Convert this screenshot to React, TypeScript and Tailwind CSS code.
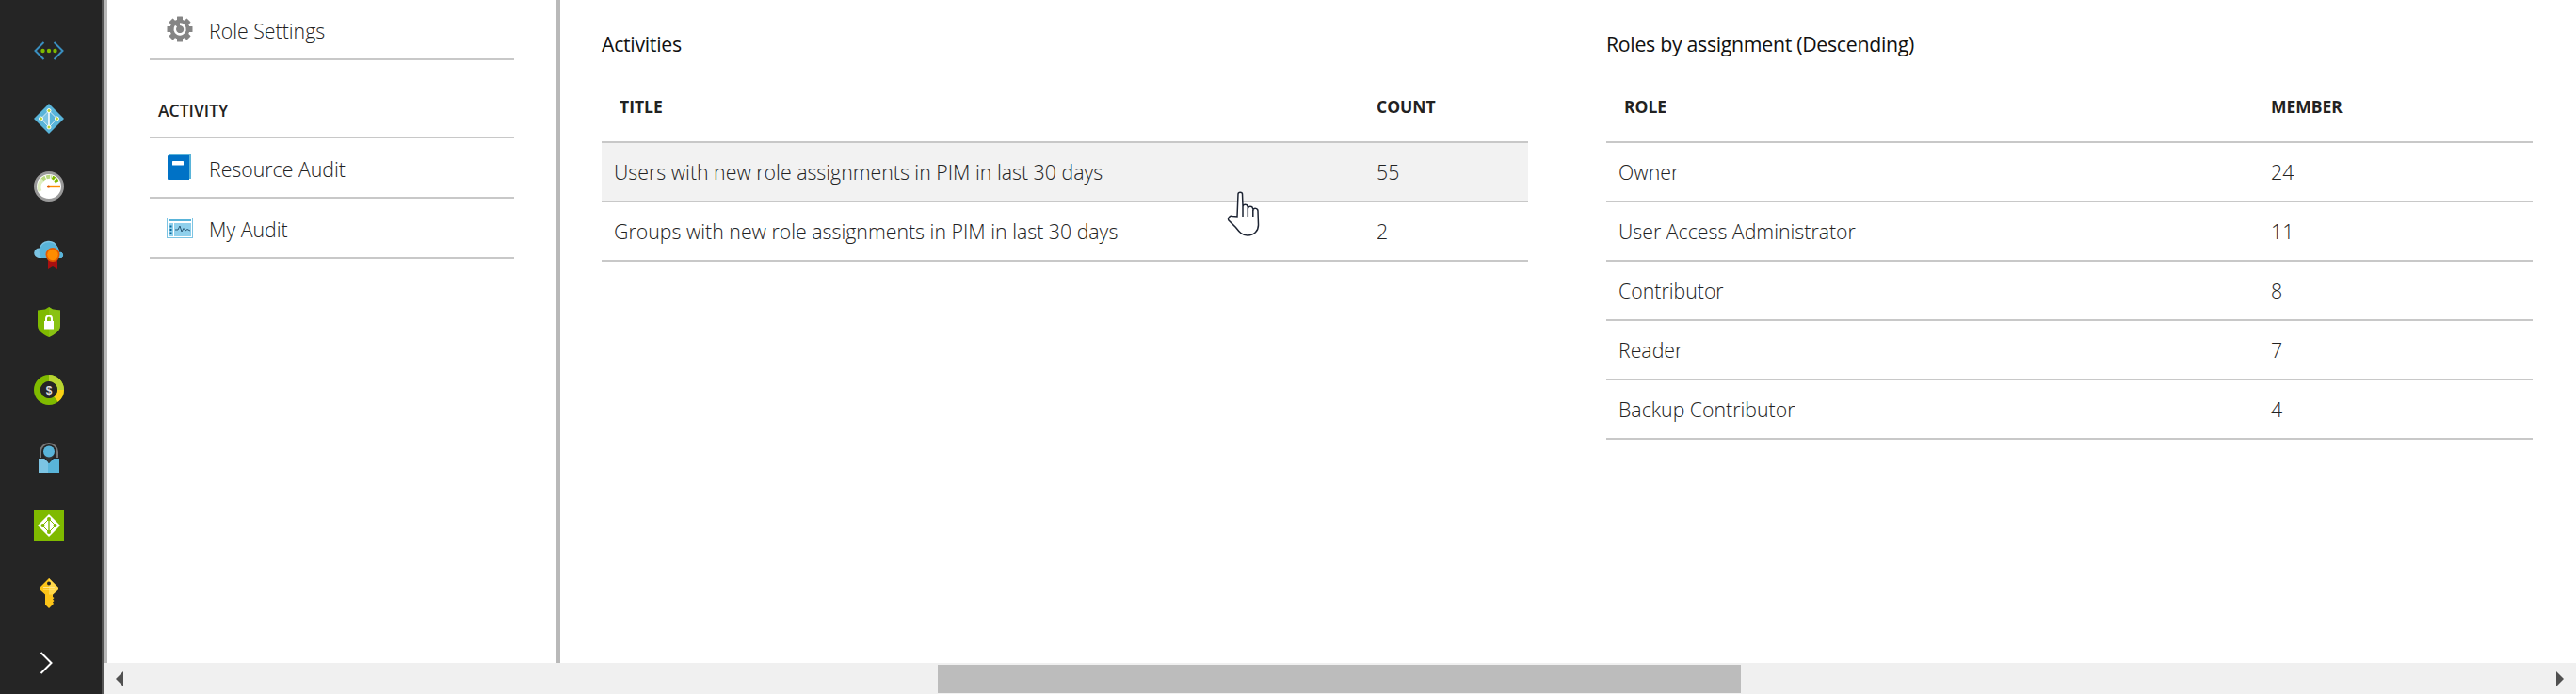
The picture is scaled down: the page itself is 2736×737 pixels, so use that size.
const font = { fontFamily: '"Open Sans", sans-serif' };

function Network() {
  return (
    <svg width="32" height="32" viewBox="0 0 32 32" fill="none">
      <path d="M10.5 1.5 L1.5 10.5 L10.5 19.5" transform="translate(0 5.5)" stroke="#3a8fc0" strokeWidth="2" />
      <path d="M21.5 1.5 L30.5 10.5 L21.5 19.5" transform="translate(0 5.5)" stroke="#3a8fc0" strokeWidth="2" />
      <circle cx="9.5" cy="16" r="2.2" fill="#7fba00" />
      <circle cx="16" cy="16" r="2.2" fill="#7fba00" />
      <circle cx="22.5" cy="16" r="2.2" fill="#7fba00" />
    </svg>
  );
}
function AadDiamond() {
  return (
    <svg width="32" height="32" viewBox="0 0 32 32" fill="none">
      <path d="M16 0 L32 16 L16 32 L0 16 Z" fill="#59b4d9" />
      <path d="M16 7.5 L7.5 16 L16 25 Z" fill="#7cc4e3" />
      <path d="M16 7.5 L24.5 16 L16 25 M16 7.5 L7.5 16 L16 25" stroke="#d8eef8" strokeWidth="1" />
      <path d="M16 7.5 V25" stroke="#fff" strokeWidth="1.5" />
      <circle cx="16" cy="7.5" r="2" fill="#b8d432" stroke="#fff" />
      <circle cx="7.5" cy="16" r="2" fill="#b8d432" stroke="#fff" />
      <circle cx="24.5" cy="16" r="2" fill="#b8d432" stroke="#fff" />
      <circle cx="16" cy="25" r="2" fill="#b8d432" stroke="#fff" />
    </svg>
  );
}
function Gauge() {
  return (
    <svg width="32" height="32" viewBox="0 0 32 32" fill="none">
      <circle cx="16" cy="16" r="14.5" fill="#fff" stroke="#999" strokeWidth="3" />
      <path d="M6.5 21 A10.5 10.5 0 0 1 9 9" stroke="#dfeec0" strokeWidth="4" />
      <path d="M9 9 A10.5 10.5 0 0 1 19 6" stroke="#b8d880" strokeWidth="4" strokeDasharray="4 1" />
      <path d="M19.5 6.5 A10.5 10.5 0 0 1 25 12" stroke="#7fba00" strokeWidth="4" strokeDasharray="3 1" />
      <path d="M15 16 H28" stroke="#ff8c00" strokeWidth="2.4" />
      <circle cx="15.5" cy="16" r="1.6" fill="#e25a00" />
    </svg>
  );
}
function CloudBadge() {
  return (
    <svg width="32" height="32" viewBox="0 0 32 32" fill="none">
      <path d="M5 20 A5 5 0 0 1 6 9.5 A10 10 0 0 1 25 8 A7 7 0 0 1 26.5 14 A3.2 3.2 0 0 1 29 20 Z" fill="#7cc4e3" />
      <path d="M8 20 A9 9 0 0 1 24 7 A7 7 0 0 1 26.5 14 A3.2 3.2 0 0 1 29 20 Z" fill="#59b4d9" />
      <path d="M15 22 V32 L20 29 L25 32 V22 Z" fill="#a80f11" />
      <circle cx="20" cy="16.5" r="7.5" fill="#e25a00" />
      <circle cx="20" cy="16.5" r="5.8" fill="#ff8c00" />
    </svg>
  );
}
function Shield() {
  return (
    <svg width="24" height="32" viewBox="0 0 24 32" fill="none">
      <path d="M12 0 L16 2.5 L24 3.5 V20 C24 26 16 30 12 32 C8 30 0 26 0 20 V3.5 L8 2.5 Z" fill="#7fba00" />
      <path d="M12 0 L16 2.5 L24 3.5 V20 C24 26 16 30 12 32 Z" fill="#90c81f" opacity="0.6" />
      <rect x="7" y="15" width="10" height="8.5" fill="#fff" />
      <path d="M9 15.5 V12.5 A3 3 0 0 1 15 12.5 V15.5" stroke="#fff" strokeWidth="2" />
    </svg>
  );
}
function Cost() {
  return (
    <svg width="32" height="32" viewBox="0 0 32 32" fill="none">
      <circle cx="16" cy="16" r="12.5" stroke="#7fba00" strokeWidth="7" />
      <path d="M16 3.5 A12.5 12.5 0 0 1 28.5 16" stroke="#b8d432" strokeWidth="7" />
      <path d="M28.5 16 A12.5 12.5 0 0 1 23.5 26" stroke="#fcd116" strokeWidth="7" />
      <circle cx="16" cy="16" r="9" fill="#252525" />
      <text x="16" y="20.5" textAnchor="middle" fontSize="12" fontWeight="700" fill="#ddd" fontFamily="'Liberation Sans', sans-serif">$</text>
    </svg>
  );
}
function Support() {
  return (
    <svg width="22" height="32" viewBox="0 0 22 32" fill="none">
      <path d="M2 16 V10 A9 9 0 0 1 20 10 V16" stroke="#777" strokeWidth="2" />
      <path d="M0 17 H6 L11 22 L16 17 H22 V32 H0 Z" fill="#59b4d9" />
      <path d="M0 17 H6 L10 21 V32 H0 Z" fill="#7cc4e3" />
      <path d="M6 14 L11 22 L16 14 Z" fill="#333" />
      <circle cx="11" cy="9.5" r="6" fill="#59b4d9" />
    </svg>
  );
}
function GroupTile() {
  return (
    <svg width="32" height="32" viewBox="0 0 32 32" fill="none">
      <rect width="32" height="32" fill="#7fba00" />
      <path d="M16 4 L28 16 L16 28 L4 16 Z" fill="#fff" />
      <path d="M16 9 L9 16 L16 23 L23 16 Z" stroke="#7fba00" strokeWidth="1" />
      <path d="M16 8 V24" stroke="#7fba00" strokeWidth="1.4" />
      <circle cx="16" cy="9" r="2" fill="#7fba00" />
      <circle cx="9.5" cy="16" r="2" fill="#7fba00" />
      <circle cx="22.5" cy="16" r="2" fill="#7fba00" />
      <circle cx="16" cy="23" r="2" fill="#7fba00" />
    </svg>
  );
}
function KeyIcon() {
  return (
    <svg width="20" height="32" viewBox="0 0 20 32" fill="none">
      <path d="M10 0 L20 10 V12 L14 17.5 V20 L15.5 21 L14 22.5 L15.5 24 L14 25.5 L15 27 L10 32 L6 28 V17.5 L0 12 V10 Z" fill="#fcc419" />
      <path d="M10 0 L20 10 V12 L14 17.5 H10 Z" fill="#ffd84a" />
      <circle cx="10" cy="5.5" r="2" fill="#252525" />
      <path d="M4 9.5 H16 M4 12 H16" stroke="#ffe58a" strokeWidth="1" />
    </svg>
  );
}
function Gear() {
  return (
    <svg width="28" height="28" viewBox="0 0 28 28" fill="none">
      <rect x="11" y="0.5" width="6" height="6" rx="0.5" fill="#858585" />
      <rect x="11" y="0.5" width="6" height="6" rx="0.5" fill="#858585" transform="rotate(45 14 14)" />
      <rect x="11" y="0.5" width="6" height="6" rx="0.5" fill="#858585" transform="rotate(90 14 14)" />
      <rect x="11" y="0.5" width="6" height="6" rx="0.5" fill="#858585" transform="rotate(135 14 14)" />
      <rect x="11" y="0.5" width="6" height="6" rx="0.5" fill="#858585" transform="rotate(180 14 14)" />
      <rect x="11" y="0.5" width="6" height="6" rx="0.5" fill="#858585" transform="rotate(225 14 14)" />
      <rect x="11" y="0.5" width="6" height="6" rx="0.5" fill="#858585" transform="rotate(270 14 14)" />
      <rect x="11" y="0.5" width="6" height="6" rx="0.5" fill="#858585" transform="rotate(315 14 14)" />
      <circle cx="14" cy="14" r="10.5" fill="#858585" />
      <path d="M10 10.5 A5.4 5.4 0 1 0 14 8.6" stroke="#fff" strokeWidth="2.6" />
    </svg>
  );
}
function Book() {
  return (
    <svg width="26" height="28" viewBox="0 0 26 28" fill="none">
      <path d="M2 0 H25 V26 H23 V1.5 H2 Z" fill="#59b4d9" />
      <path d="M1 1 H23 V27 H1 Q0 27 0 26 V2 Q0 1 1 1 Z" fill="#0072c6" />
      <rect x="5" y="7" width="12" height="4.5" rx="0.5" fill="#fff" />
    </svg>
  );
}
function Monitor() {
  return (
    <svg width="28" height="22" viewBox="0 0 28 22" fill="none">
      <rect x="0.5" y="0.5" width="27" height="21" fill="#fff" stroke="#7cc4e3" />
      <rect x="2" y="2" width="24" height="2" fill="#59b4d9" />
      <rect x="2" y="6" width="24" height="14" fill="#8fd0ec" />
      <rect x="7" y="6" width="1" height="14" fill="#fff" />
      <rect x="3.5" y="8.5" width="2" height="2" fill="#0a6a9c" />
      <rect x="3.5" y="12" width="2" height="2" fill="#0a6a9c" />
      <rect x="3.5" y="15.5" width="2" height="2" fill="#0a6a9c" />
      <path d="M9 13 H12 L14 9 L16 15 L18 11.5 L20 14 L22 12.5 L25 14" stroke="#2a5a78" strokeWidth="1" />
    </svg>
  );
}
function Chevron() {
  return (
    <svg width="14" height="24" viewBox="0 0 14 24" fill="none">
      <path d="M1.5 1 L12.5 12 L1.5 23" stroke="#fff" strokeWidth="2" />
    </svg>
  );
}
function HandCursor() {
  return (
    <svg width="35" height="48" viewBox="0 0 35 48" fill="none">
      <path
        d="M11 27 L12 3 C12 0.5 16.5 0.5 16.5 3 L17 16 C17.5 13.5 21.5 13.5 22 16 L22.5 18 C23 15.5 27 15.5 27.5 18 L28 19.5 C29 17.5 33 18 33 21 L33.5 36 C33.5 42 29 47 22 47 C16 47 13 43 9.5 38.5 L2 31 C0.5 28.5 3.5 25.5 6 26.5 Z"
        fill="#fff"
        stroke="#1d2433"
        strokeWidth="1.5"
      />
      <path d="M17 16 V27 M22.3 18 V27 M27.8 20 V27" stroke="#1d2433" strokeWidth="1.5" />
    </svg>
  );
}

const rail = [
  <Network />, <AadDiamond />, <Gauge />, <CloudBadge />, <Shield />,
  <Cost />, <Support />, <GroupTile />, <KeyIcon />,
];

function NavRow({ icon, label }: { icon: React.ReactNode; label: string }) {
  return (
    <div className="flex h-[64px] items-center border-b-2 border-[#c8c8c8]">
      <div className="flex w-[63px] shrink-0 justify-center">{icon}</div>
      <span className="pt-[3px] text-[21.3px] font-light text-[#222]">{label}</span>
    </div>
  );
}

function Table({ title, col1, col2, split, rows, hover }: {
  title: string; col1: string; col2: string; split: string;
  rows: [string, string][]; hover?: boolean;
}) {
  return (
    <section className="w-[984px] shrink-0">
      <h2 className="flex h-[34px] items-center text-[21.3px] font-normal tracking-[-0.3px] text-[#111]">{title}</h2>
      <div className="mt-[21px] flex h-[67px] items-center border-b-2 border-[#c8c8c8] pb-[8px]">
        <div className={`${split} shrink-0 pl-[19px] text-[17.5px] font-bold text-[#222]`}>{col1}</div>
        <div className="text-[17.5px] font-bold text-[#222]">{col2}</div>
      </div>
      {rows.map(([a, b], i) => (
        <div
          key={a}
          className={`flex h-[63px] items-center border-b-2 border-[#c8c8c8] ${hover && i === 0 ? "bg-[#f2f2f2]" : ""}`}
        >
          <div className={`${split} shrink-0 pl-[13px] text-[21.3px] font-light text-[#222]`}>{a}</div>
          <div className="text-[21.3px] font-light text-[#222]">{b}</div>
        </div>
      ))}
    </section>
  );
}

export default function App() {
  return (
    <div className="relative flex h-[737px] w-[2736px] overflow-hidden bg-white" style={font}>
      <aside className="flex w-[108px] shrink-0 flex-col items-center bg-[#252525] pr-[4px] pt-[38px]">
        {rail.map((icon, i) => (
          <div key={i} className="flex h-[72px] w-[32px] shrink-0 justify-center">{icon}</div>
        ))}
        <div className="mt-[6px] mr-[6px]"><Chevron /></div>
      </aside>
      <div className="w-[2px] shrink-0 bg-[#555]" />
      <div className="flex min-w-0 flex-1 flex-col">
        <div className="flex min-h-0 flex-1">
          <nav className="w-[485px] shrink-0 border-l-4 border-r-4 border-[#b9b9b9] pl-[45px] pr-[45px]">
            <div className="w-[387px]">
              <NavRow icon={<Gear />} label="Role Settings" />
              <div className="flex h-[83px] items-end border-b-2 border-[#c8c8c8] pb-[15px] pl-[9px] text-[17.5px] font-semibold text-[#222]">ACTIVITY</div>
              <NavRow icon={<Book />} label="Resource Audit" />
              <NavRow icon={<Monitor />} label="My Audit" />
            </div>
          </nav>
          <main className="flex gap-[83px] pl-[44px] pt-[30px]">
            <Table
              title="Activities" col1="TITLE" col2="COUNT" split="w-[823px]" hover
              rows={[
                ["Users with new role assignments in PIM in last 30 days", "55"],
                ["Groups with new role assignments in PIM in last 30 days", "2"],
              ]}
            />
            <Table
              title="Roles by assignment (Descending)" col1="ROLE" col2="MEMBER" split="w-[706px]"
              rows={[
                ["Owner", "24"],
                ["User Access Administrator", "11"],
                ["Contributor", "8"],
                ["Reader", "7"],
                ["Backup Contributor", "4"],
              ]}
            />
          </main>
        </div>
        <div className="flex h-[33px] shrink-0 items-center bg-[#f0f0f0]">
          <div className="ml-[13px] h-0 w-0 border-y-[8px] border-r-[8px] border-y-transparent border-r-[#505050]" />
          <div className="ml-[865px] h-[30px] w-[853px] bg-[#bcbcbc]" />
          <div className="ml-auto mr-[13px] h-0 w-0 border-y-[8px] border-l-[8px] border-y-transparent border-l-[#505050]" />
        </div>
      </div>
      <div className="absolute left-[1303px] top-[203px]"><HandCursor /></div>
    </div>
  );
}
